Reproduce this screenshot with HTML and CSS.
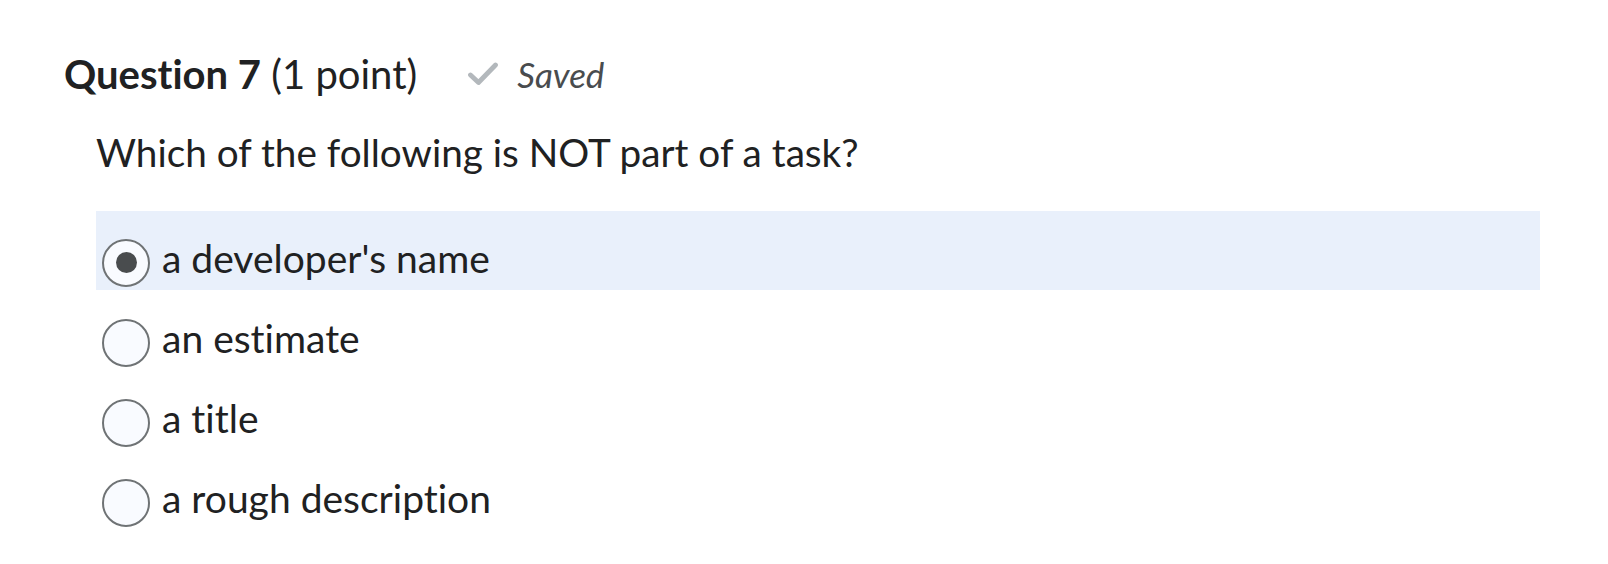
FILE: index.html
```html
<!DOCTYPE html>
<html lang="en">
<head>
<meta charset="utf-8">
<title>Question 7</title>
<link rel="stylesheet" href="styles.css">
</head>
<body>
<div class="question">
  <div class="q-header">
    <h2 class="q-title"><strong>Question 7</strong> (1 point)</h2>
    <span class="saved">
      <svg class="check" viewBox="0 0 32 24" width="32" height="24" aria-hidden="true">
        <path d="M3.5 13 L11.5 20.5 L28.5 3" fill="none" stroke="#b3b8bc" stroke-width="4.8" stroke-linecap="round" stroke-linejoin="round"/>
      </svg>
      <span class="saved-label">Saved</span>
    </span>
  </div>
  <div class="q-body">
    <p class="q-text">Which of the following is NOT part of a task?</p>
    <ul class="options">
      <li class="option selected"><span class="radio checked"></span><span class="label">a developer's name</span></li>
      <li class="option"><span class="radio"></span><span class="label">an estimate</span></li>
      <li class="option"><span class="radio"></span><span class="label">a title</span></li>
      <li class="option"><span class="radio"></span><span class="label">a rough description</span></li>
    </ul>
  </div>
</div>
</body>
</html>
```

FILE: styles.css
```css
html, body {
  margin: 0;
  padding: 0;
  background: #ffffff;
}

body {
  font-family: Lato, "Noto Sans", sans-serif;
  font-variant-ligatures: no-common-ligatures;
  color: #202122;
}

.question {
  padding: 49px 68px 0 64px;
}

.q-header {
  display: flex;
  align-items: center;
  gap: 50px;
}

.q-title {
  margin: 0;
  font-size: 40px;
  line-height: 50px;
  font-weight: 400;
  color: #202122;
}

.q-title strong {
  font-weight: 700;
}

.saved {
  display: flex;
  align-items: center;
  gap: 18px;
  color: #494c4e;
}

.check {
  display: block;
  width: 32px;
  height: 24px;
}

.saved-label {
  font-style: italic;
  font-size: 35px;
  line-height: 50px;
}

.q-body {
  margin-left: 32px;
}

.q-text {
  margin: 30px 0 0 0;
  font-size: 38.7px;
  line-height: 47px;
}

.options {
  list-style: none;
  margin: 35px 0 0 0;
  padding: 0;
}

.option {
  display: flex;
  align-items: center;
  gap: 12px;
  height: 79px;
  box-sizing: border-box;
  padding: 24px 0 8px 6px;
  font-size: 39px;
  line-height: 47px;
}

.option + .option {
  margin-top: 1px;
}

.option.selected {
  background: #e9f0fb;
}

.radio {
  flex: none;
  width: 48px;
  height: 48px;
  box-sizing: border-box;
  border: 2px solid #6f7375;
  border-radius: 50%;
  background: #f9fbff;
  margin-top: 8px;
  display: flex;
  align-items: center;
  justify-content: center;
}

.radio.checked::after {
  content: "";
  width: 21px;
  height: 21px;
  border-radius: 50%;
  background: #494c4e;
}
```
